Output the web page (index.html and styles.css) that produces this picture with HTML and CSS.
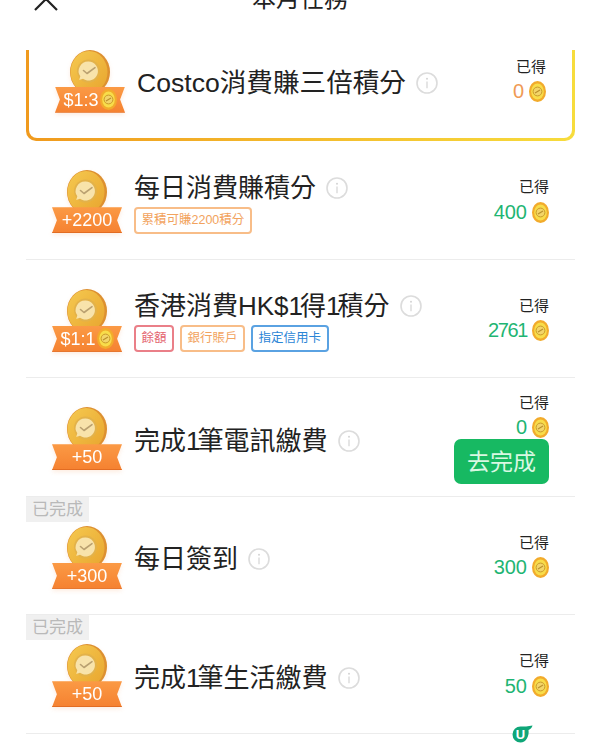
FILE: index.html
```html
<!DOCTYPE html>
<html lang="zh-Hant">
<head>
  <meta charset="UTF-8" />
  <meta name="viewport" content="width=device-width, initial-scale=1.0"/>
  <title>本月任務</title>
  <link rel="stylesheet" href="styles.css">
</head>
<body>

<svg class="defs" width="0" height="0">
  <defs>
    <linearGradient id="coin-face" x1="0" y1="0" x2="1" y2="1">
      <stop offset="0" stop-color="#f5c950"/>
      <stop offset="1" stop-color="#e8a52e"/>
    </linearGradient>
    <symbol id="coin" viewBox="0 0 40 44">
      <ellipse cx="20" cy="22" rx="20" ry="22" fill="#dd9030"/>
      <ellipse cx="19" cy="22" rx="18.500" ry="21" fill="url(#coin-face)"/>
      <circle cx="18.500" cy="21" r="11.500" fill="#e3b24a"/>
      <path d="M18.500 11.500a9.500 9.500 0 1 1-5.500 17.300l-3.800 1.100 1.100-3.600A9.500 9.500 0 0 1 18.500 11.500z" fill="#f8e3ab"/>
      <path d="M13.500 20.500l3.500 3 8-5.800" fill="none" stroke="#b9a070" stroke-width="1.600" stroke-linecap="round" stroke-linejoin="round"/>
    </symbol>
    <symbol id="mini" viewBox="0 0 17 21">
      <ellipse cx="8.500" cy="10.500" rx="8.500" ry="10.500" fill="#f2ab2c"/>
      <ellipse cx="8.500" cy="10.500" rx="6.300" ry="8" fill="#f8dd4a"/>
      <circle cx="8.500" cy="10.500" r="4.400" fill="#f3d568" stroke="#c99a2a" stroke-width="1"/>
      <path d="M6 12l5-3" stroke="#b98f2c" stroke-width="1.100"/>
    </symbol>
    <symbol id="info" viewBox="0 0 22 22">
      <circle cx="11" cy="11" r="10" fill="#fff" stroke="#dcdcdc" stroke-width="1.600"/>
      <circle cx="11" cy="6.800" r="1" fill="#d4d4d4"/>
      <path d="M11 9.600v6.600" stroke="#d4d4d4" stroke-width="1.200"/>
    </symbol>
  </defs>
</svg>

<div class="page">
  <header class="topbar">
    <svg class="close" width="24" height="11" viewBox="0 0 24 11">
      <path d="M1-12L23 10M23-12L1 10" fill="none" stroke="#222" stroke-width="2.200"/>
    </svg>
    <h1 class="title">本月任務</h1>
    <span></span>
  </header>

  <section class="card">
    <div class="card-inner">
      <div class="badge">
        <svg class="coin"><use href="#coin"/></svg>
        <div class="ribbon">$1:3<svg class="mini"><use href="#mini"/></svg></div>
      </div>
      <div class="task">
        <div class="task-name">Costco消費賺三倍積分<svg class="info"><use href="#info"/></svg></div>
      </div>
      <div class="earned">
        <div class="earned-label">已得</div>
        <div class="earned-value orange">0<svg class="mini"><use href="#mini"/></svg></div>
      </div>
    </div>
  </section>

  <section class="row">
    <div class="badge">
      <svg class="coin"><use href="#coin"/></svg>
      <div class="ribbon">+2200</div>
    </div>
    <div class="task">
      <div class="task-name">每日消費賺積分<svg class="info"><use href="#info"/></svg></div>
      <div class="tags"><span class="tag tag-orange">累積可賺2200積分</span></div>
    </div>
    <div class="earned">
      <div class="earned-label">已得</div>
      <div class="earned-value">400<svg class="mini"><use href="#mini"/></svg></div>
    </div>
  </section>

  <section class="row">
    <div class="badge">
      <svg class="coin"><use href="#coin"/></svg>
      <div class="ribbon">$1:1<svg class="mini"><use href="#mini"/></svg></div>
    </div>
    <div class="task">
      <div class="task-name"><span>香港消費HK$<span class="one">1</span>得<span class="one">1</span>積分</span><svg class="info"><use href="#info"/></svg></div>
      <div class="tags">
        <span class="tag tag-red">餘額</span>
        <span class="tag tag-orange">銀行賬戶</span>
        <span class="tag tag-blue">指定信用卡</span>
      </div>
    </div>
    <div class="earned">
      <div class="earned-label">已得</div>
      <div class="earned-value"><span class="tight">2761</span><svg class="mini"><use href="#mini"/></svg></div>
    </div>
  </section>

  <section class="row">
    <div class="badge">
      <svg class="coin"><use href="#coin"/></svg>
      <div class="ribbon">+50</div>
    </div>
    <div class="task">
      <div class="task-name"><span>完成<span class="one">1</span>筆電訊繳費</span><svg class="info"><use href="#info"/></svg></div>
    </div>
    <div class="earned">
      <div class="earned-label">已得</div>
      <div class="earned-value">0<svg class="mini"><use href="#mini"/></svg></div>
      <button class="go" type="button">去完成</button>
    </div>
  </section>

  <section class="row">
    <span class="done">已完成</span>
    <div class="badge">
      <svg class="coin"><use href="#coin"/></svg>
      <div class="ribbon">+300</div>
    </div>
    <div class="task">
      <div class="task-name">每日簽到<svg class="info"><use href="#info"/></svg></div>
    </div>
    <div class="earned">
      <div class="earned-label">已得</div>
      <div class="earned-value">300<svg class="mini"><use href="#mini"/></svg></div>
    </div>
  </section>

  <section class="row">
    <span class="done">已完成</span>
    <div class="badge">
      <svg class="coin"><use href="#coin"/></svg>
      <div class="ribbon">+50</div>
    </div>
    <div class="task">
      <div class="task-name"><span>完成<span class="one">1</span>筆生活繳費</span><svg class="info"><use href="#info"/></svg></div>
    </div>
    <div class="earned">
      <div class="earned-label">已得</div>
      <div class="earned-value">50<svg class="mini"><use href="#mini"/></svg></div>
    </div>
  </section>

  <!-- watermark -->
  <div class="mark">
    <svg width="22" height="18" viewBox="0 0 22 18">
      <path d="M9.500 1.500C13 1.500 17 1.500 21.500 .500 21 2.500 19.500 4 17.500 5 18.500 11 15 17.500 9.500 17.500A8 8 0 0 1 9.500 1.500z" fill="#0fa678"/>
      <text x="9.500" y="14" text-anchor="middle" class="mark-letter">U</text>
    </svg>
  </div>
</div>

</body>
</html>
```

FILE: styles.css
```css
body {
  margin: 0;
  background: #fff;
  color: #222;
  font-family: "Liberation Sans", "Noto Sans CJK TC", sans-serif;
}

.defs {
  display: block;
  height: 0;
}

.page {
  position: relative;
  height: 750px;
  overflow: hidden;
}

.topbar {
  display: grid;
  grid-template-columns: 1fr auto 1fr;
  grid-template-rows: 11px;
  align-items: end;
  height: 11px;
  overflow: hidden;
  padding-left: 34px;
  padding-right: 34px;
  margin-bottom: 39px;
}

.title {
  margin: 0 0 -3px;
  font-size: 24px;
  font-weight: 400;
  line-height: 30px;
}

.card {
  margin: 0 25px 0 26px;
  padding: 0 3px 3px;
  height: 91px;
  box-sizing: border-box;
  border-radius: 0 0 10px 10px;
  background: linear-gradient(90deg, #f09a1e, #f7dc3c);
}

.card-inner {
  display: flex;
  align-items: center;
  height: 88px;
  box-sizing: border-box;
  padding: 0 26px 30px;
  background: #fff;
  border-radius: 0 0 8px 8px;
  overflow: hidden;
}

.card .task-name {
  font-size: 26.6px;
}

.row {
  position: relative;
  display: flex;
  align-items: center;
  height: 118.5px;
  box-sizing: border-box;
  margin: 0 25px 0 26px;
  padding: 0 26px;
  border-bottom: 1px solid #ececec;
}

.badge {
  display: flex;
  flex-direction: column;
  align-items: center;
  flex-shrink: 0;
  width: 70px;
  height: 63px;
  margin-top: 4px;
  margin-right: 12px;
  filter: drop-shadow(0 2px 2px rgba(240, 130, 50, 0.15));
}

.coin {
  display: block;
  width: 40px;
  height: 44px;
  margin-bottom: -7px;
}

.ribbon {
  display: flex;
  align-items: center;
  justify-content: center;
  gap: 1px;
  width: 70px;
  height: 26px;
  background: linear-gradient(180deg, #fb9a45, #f58130);
  box-shadow: inset 0 -1px 0 #e26c22;
  clip-path: polygon(0 0, 100% 0, 93% 50%, 100% 100%, 0 100%, 7% 50%);
  color: #fff;
  font-size: 18px;
  line-height: 26px;
}

.mini {
  display: block;
  width: 17px;
  height: 21px;
  flex-shrink: 0;
}

.task {
  flex: 1;
  min-width: 0;
  padding-top: 8px;
}

.task-name {
  display: flex;
  align-items: center;
  font-size: 26px;
  line-height: 34px;
  white-space: nowrap;
}

/* the 1 in the original font is narrower than in Liberation */
.one {
  letter-spacing: -3px;
}

.tight {
  letter-spacing: -1.4px;
}

.info {
  width: 22px;
  height: 22px;
  margin-left: 10px;
  flex-shrink: 0;
}

.tags {
  display: flex;
  gap: 6px;
  margin-top: 2px;
  margin-bottom: 3px;
}

.tag {
  box-sizing: border-box;
  height: 27px;
  padding: 0 5.500px;
  border: 2px solid;
  border-radius: 4px;
  font-size: 12.5px;
  line-height: 23px;
}

.tag-orange {
  border-color: #f8bd88;
  color: #f2a35e;
}

.tag-red {
  border-color: #ea7f88;
  color: #e4656f;
}

.tag-blue {
  border-color: #5aa2e2;
  color: #2c86d6;
}

.earned {
  display: flex;
  flex-direction: column;
  align-items: flex-end;
  flex-shrink: 0;
  padding-top: 3px;
}

.earned-label {
  font-size: 15px;
  line-height: 20px;
}

.earned-value {
  display: flex;
  align-items: center;
  gap: 5px;
  height: 26px;
  margin-top: 2px;
  color: #1fb573;
  font-size: 20px;
}

.earned-value.orange {
  color: #f09a55;
}

.go {
  width: 95px;
  height: 45px;
  margin-top: -2px;
  padding: 0 0 3px;
  border: none;
  border-radius: 7px;
  background: #17b962;
  color: #d9f8e2;
  font-family: inherit;
  font-size: 23px;
}

.done {
  position: absolute;
  top: 0;
  left: 0;
  width: 63px;
  height: 25px;
  background: #f0f0f0;
  color: #b9b9b9;
  font-size: 17px;
  line-height: 25px;
  text-align: center;
}

.mark {
  position: absolute;
  left: 511px;
  top: 725px;
  width: 22px;
  height: 18px;
}

.mark-letter {
  fill: #fff;
  font-size: 13px;
  font-weight: 700;
}
```
